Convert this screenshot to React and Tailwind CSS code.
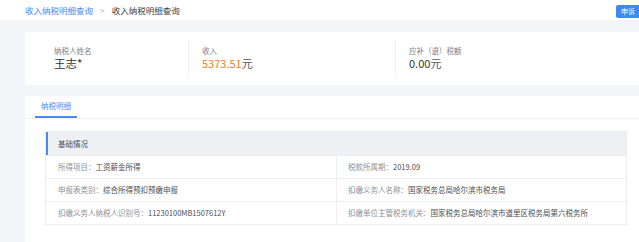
import React from 'react';

const rows = [
  [['所得项目', '工资薪金所得'], ['税款所属期', '2019.09']],
  [['申报表类别', '综合所得预扣预缴申报'], ['扣缴义务人名称', '国家税务总局哈尔滨市税务局']],
  [['扣缴义务人纳税人识别号', '11230100MB1507612Y'], ['扣缴单位主管税务机关', '国家税务总局哈尔滨市道里区税务局第六税务所']],
];

function Cell({ label, value, first }) {
  return (
    <div className={`flex items-center h-full pl-3 ${first ? 'w-[291px] border-r border-[#eceef2]' : 'flex-1 pl-[11px]'}`}>
      <span className="text-[#8c8f96]">{label}：</span>
      <span className="text-[#4a4d52]">{value}</span>
    </div>
  );
}

export default function App() {
  return (
    <div className="w-[639px] h-[242px] overflow-hidden bg-[#f4f5f8] font-['Noto_Sans_CJK_SC','Noto_Sans',sans-serif]">
      {/* top bar */}
      <div className="h-[20px] bg-white flex items-center pl-[25px] text-[8.5px]">
        <span className="text-[#4a8af4]">收入纳税明细查询</span>
        <span className="text-[#b5b8be] mx-[7px]">&gt;</span>
        <span className="text-[#3a3d42]">收入纳税明细查询</span>
        <div className="ml-auto mt-[2px] h-[13px] w-[23px] bg-[#3d8af5] rounded-l-[2px] text-white text-[7px] flex items-center pl-[5px] overflow-hidden whitespace-nowrap">
          申诉
        </div>
      </div>

      <div className="pl-[25px] pt-[12px]">
        {/* summary card */}
        <div className="h-[53px] bg-white flex items-center">
          <div className="w-[164px] pl-[29px] h-[38px] flex flex-col justify-center border-r border-[#eef0f3]">
            <div className="text-[7.5px] text-[#7d8088] leading-[10px]">纳税人姓名</div>
            <div className="text-[11.5px] text-[#333] leading-[15px]">王志*</div>
          </div>
          <div className="w-[207px] pl-[13px] h-[38px] flex flex-col justify-center border-r border-[#eef0f3]">
            <div className="text-[7.5px] text-[#7d8088] leading-[10px]">收入</div>
            <div className="text-[11px] leading-[15px]">
              <span className="text-[#f0802c]">5373.51</span>
              <span className="text-[#555]">元</span>
            </div>
          </div>
          <div className="pl-[13px] h-[38px] flex flex-col justify-center">
            <div className="text-[7.5px] text-[#7d8088] leading-[10px]">应补（退）税额</div>
            <div className="text-[11px] text-[#333] leading-[15px]">0.00<span className="text-[#555]">元</span></div>
          </div>
        </div>

        {/* detail card */}
        <div className="mt-[11px] h-[200px] bg-white">
          <div className="h-[23px] border-b border-[#eef0f3] flex items-end pl-[10px]">
            <div className="h-[22px] w-[42px] flex items-center justify-center text-[7.5px] text-[#4a8af4] border-b-2 border-[#4a8af4]">
              纳税明细
            </div>
          </div>

          <div className="ml-[20px] mt-[12px] w-[582px] border border-[#eceef2] text-[7.5px]">
            <div className="h-[23px] bg-[#eef0f3] border-l-2 border-[#4a8af4] flex items-center pl-[10px] text-[#4a4d52]">
              基础情况
            </div>
            {rows.map((r, i) => (
              <div key={i} className="h-[23px] flex border-t border-[#eceef2]">
                <Cell label={r[0][0]} value={r[0][1]} first />
                <Cell label={r[1][0]} value={r[1][1]} />
              </div>
            ))}
          </div>
        </div>
      </div>
    </div>
  );
}
